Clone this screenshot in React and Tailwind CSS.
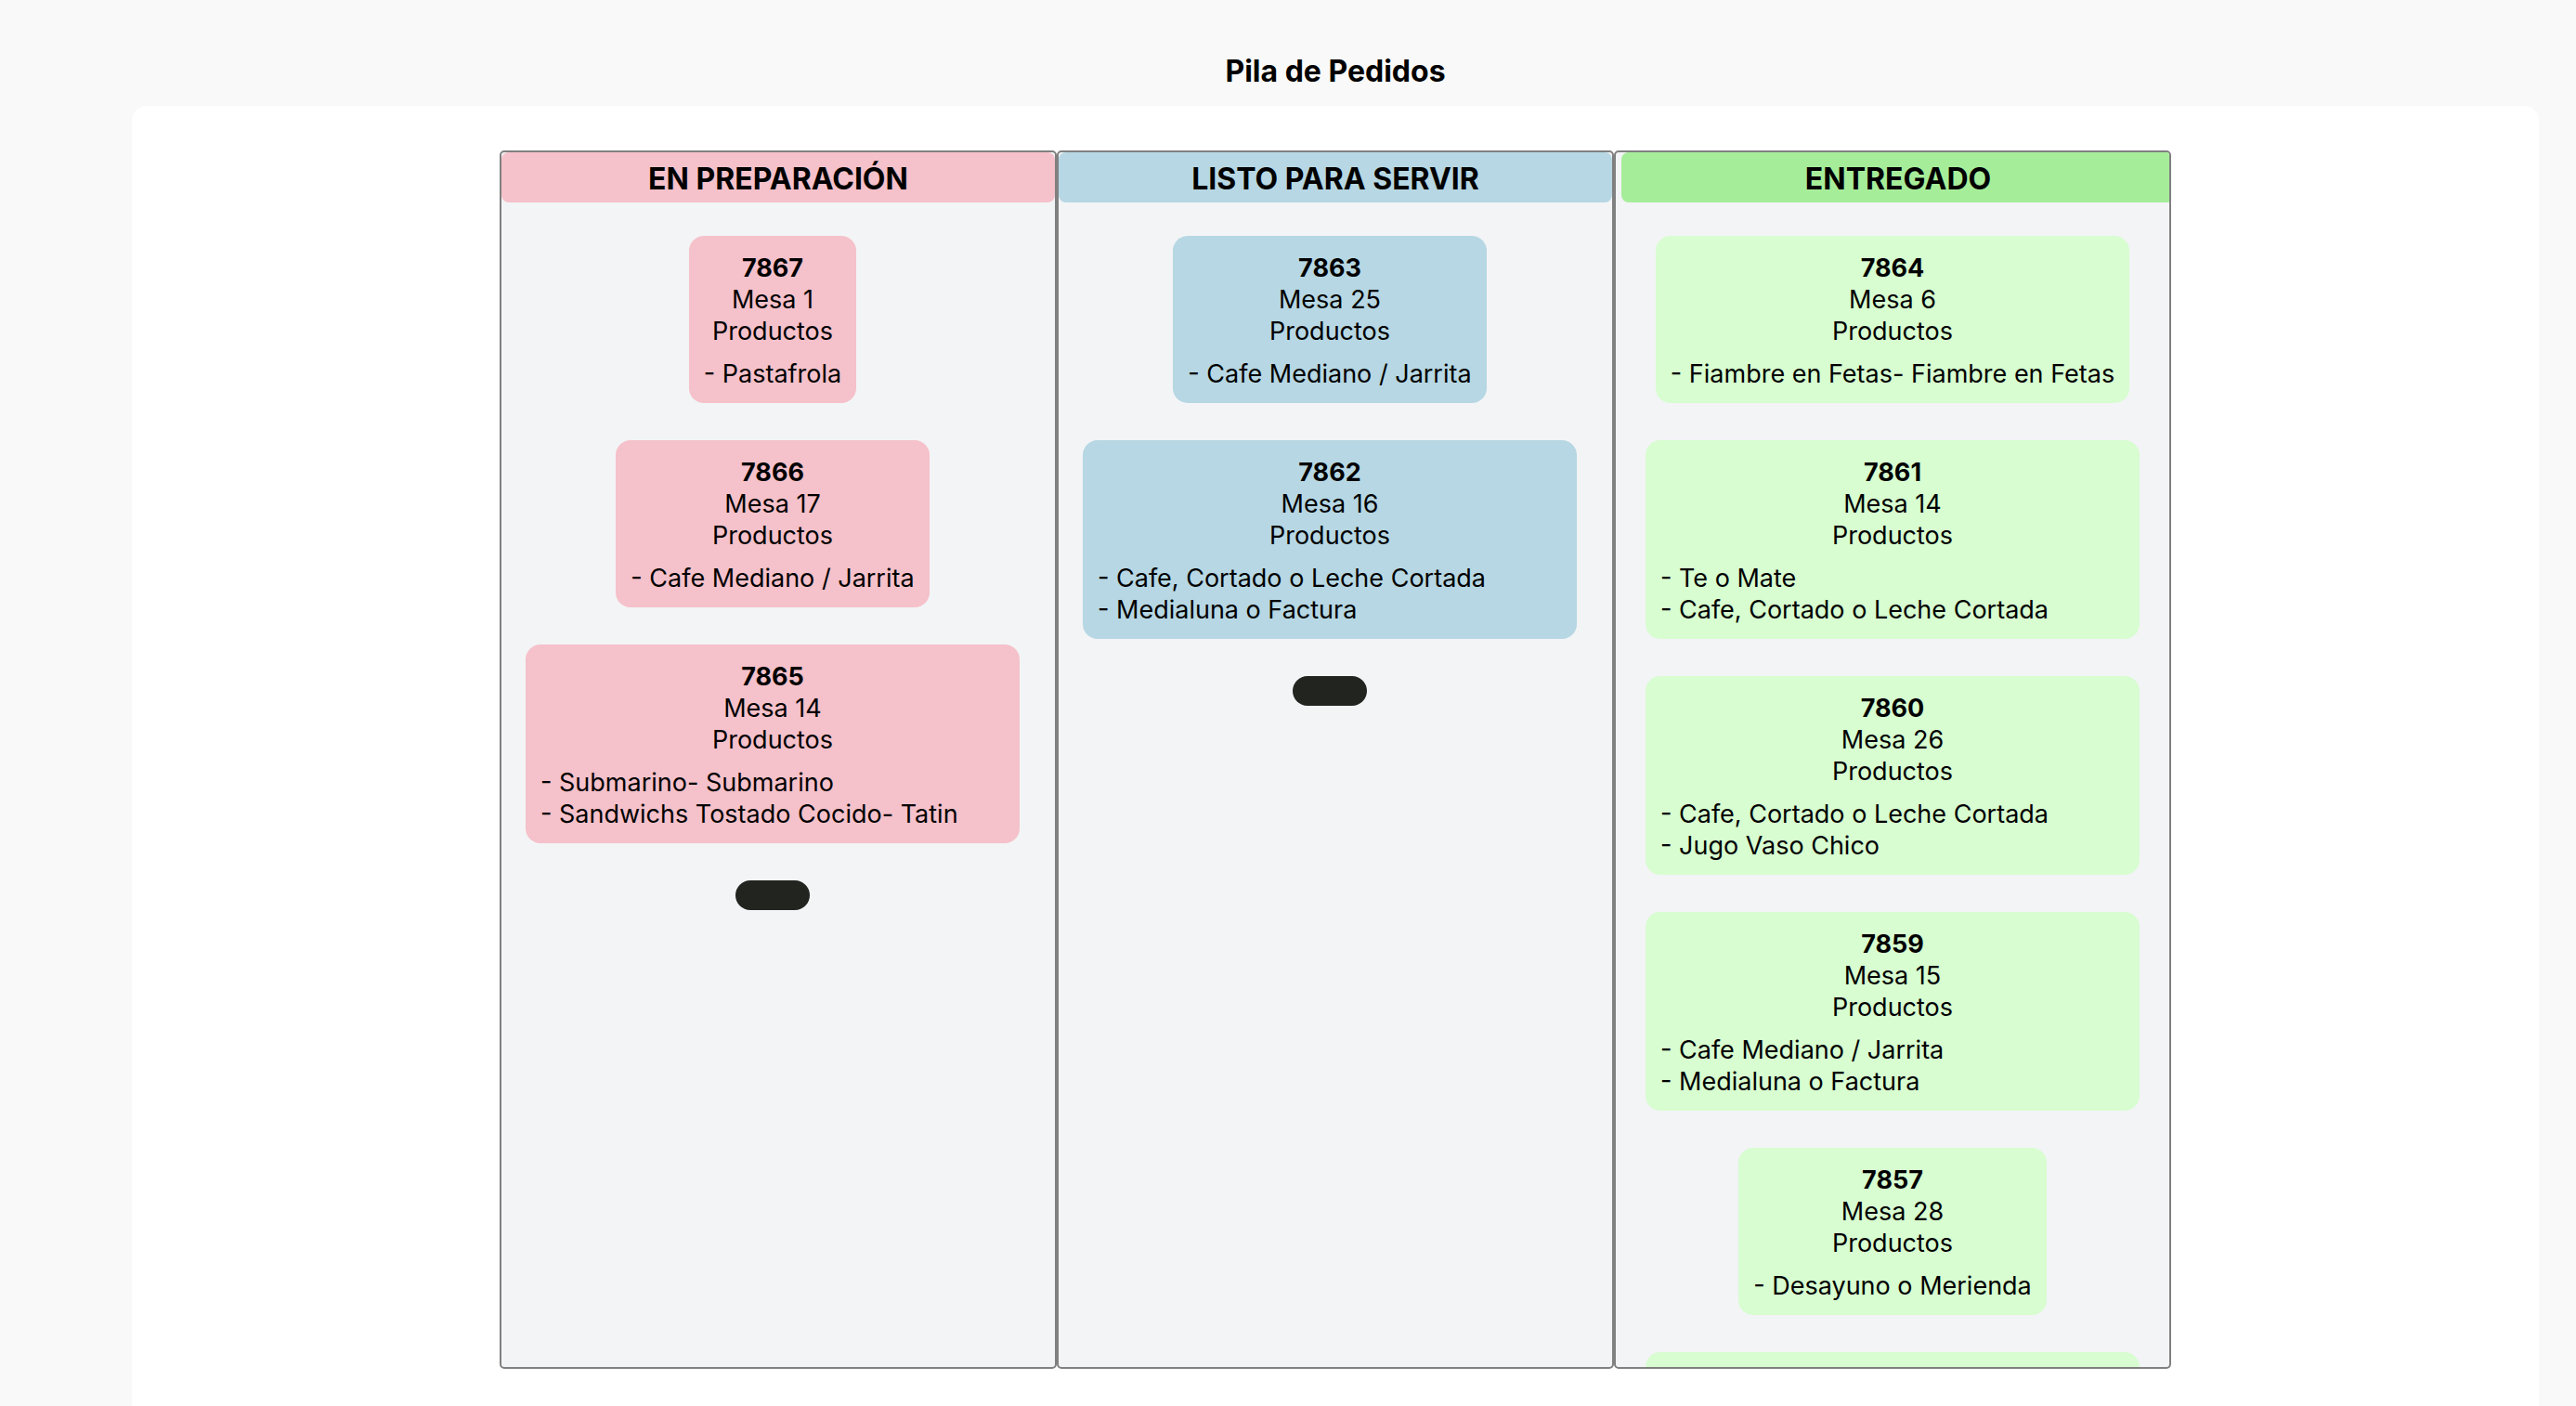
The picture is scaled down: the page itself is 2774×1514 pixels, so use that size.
const columns = [
  {
    title: "EN PREPARACIÓN",
    header: "bg-[#f5c1ca]",
    card: "bg-[#f5c1ca]",
    list: "pl-[26px] pr-[38px]",
    more: true,
    orders: [
      { id: 7867, table: 1, lines: ["- Pastafrola"] },
      { id: 7866, table: 17, lines: ["- Cafe Mediano / Jarrita"] },
      { id: 7865, table: 14, lines: ["- Submarino- Submarino", "- Sandwichs Tostado Cocido- Tatin"] },
    ],
  },
  {
    title: "LISTO PARA SERVIR",
    header: "bg-[#b6d7e3]",
    card: "bg-[#b6d7e3]",
    list: "pl-[26px] pr-[38px]",
    more: true,
    orders: [
      { id: 7863, table: 25, lines: ["- Cafe Mediano / Jarrita"] },
      { id: 7862, table: 16, lines: ["- Cafe, Cortado o Leche Cortada", "- Medialuna o Factura"] },
    ],
  },
  {
    title: "ENTREGADO",
    header: "bg-[#a6ed9a] ml-1.5 -mr-1.5",
    card: "bg-[#d7fdd0]",
    list: "px-8",
    more: false,
    orders: [
      { id: 7864, table: 6, lines: ["- Fiambre en Fetas- Fiambre en Fetas"] },
      { id: 7861, table: 14, lines: ["- Te o Mate", "- Cafe, Cortado o Leche Cortada"] },
      { id: 7860, table: 26, lines: ["- Cafe, Cortado o Leche Cortada", "- Jugo Vaso Chico"] },
      { id: 7859, table: 15, lines: ["- Cafe Mediano / Jarrita", "- Medialuna o Factura"] },
      { id: 7857, table: 28, lines: ["- Desayuno o Merienda"] },
    ],
  },
];

function OrderCard({ order, color }) {
  const width = order.lines.length > 1 ? "w-full" : "w-fit";
  return (
    <li className={`shrink-0 rounded-2xl px-4 pt-[18px] pb-3.5 text-center ${width} ${color}`}>
      <h3 className="font-bold">{order.id}</h3>
      <p>Mesa {order.table}</p>
      <p>Productos</p>
      <div className="mt-3 text-left whitespace-nowrap">
        {order.lines.map((line) => (
          <p key={line}>{line}</p>
        ))}
      </div>
    </li>
  );
}

function Column({ column }) {
  return (
    <section className="overflow-hidden rounded-[5px] border-2 border-[#808080] bg-[#f3f4f6]">
      <h2
        className={`flex h-[54px] items-center justify-center rounded-lg pt-1 text-[32px] leading-10 font-bold ${column.header}`}
      >
        {column.title}
      </h2>
      <ul className={`flex flex-col items-center gap-10 pt-9 text-[27px] leading-[34px] ${column.list}`}>
        {column.orders.map((order) => (
          <OrderCard key={order.id} order={order} color={column.card} />
        ))}
        {column.more ? (
          <li className="flex">
            <button type="button" aria-label="Ver más" className="h-8 w-20 rounded-2xl bg-[#222420]" />
          </li>
        ) : (
          <li className={`h-[180px] w-full shrink-0 rounded-2xl ${column.card}`} />
        )}
      </ul>
    </section>
  );
}

export default function App() {
  return (
    <div className="flex h-screen flex-col overflow-hidden bg-[#f9f9f9] pr-10 pl-[142px] font-['Inter',sans-serif] text-black">
      <h1 className="flex h-[114px] shrink-0 items-end justify-center pb-[17px] text-[32px] leading-10 font-bold">
        Pila de Pedidos
      </h1>
      <main className="flex min-h-0 flex-1 justify-center rounded-t-2xl bg-white pt-12 pb-10">
        <div className="grid w-full max-w-[1800px] grid-cols-3">
          {columns.map((column) => (
            <Column key={column.title} column={column} />
          ))}
        </div>
      </main>
    </div>
  );
}
